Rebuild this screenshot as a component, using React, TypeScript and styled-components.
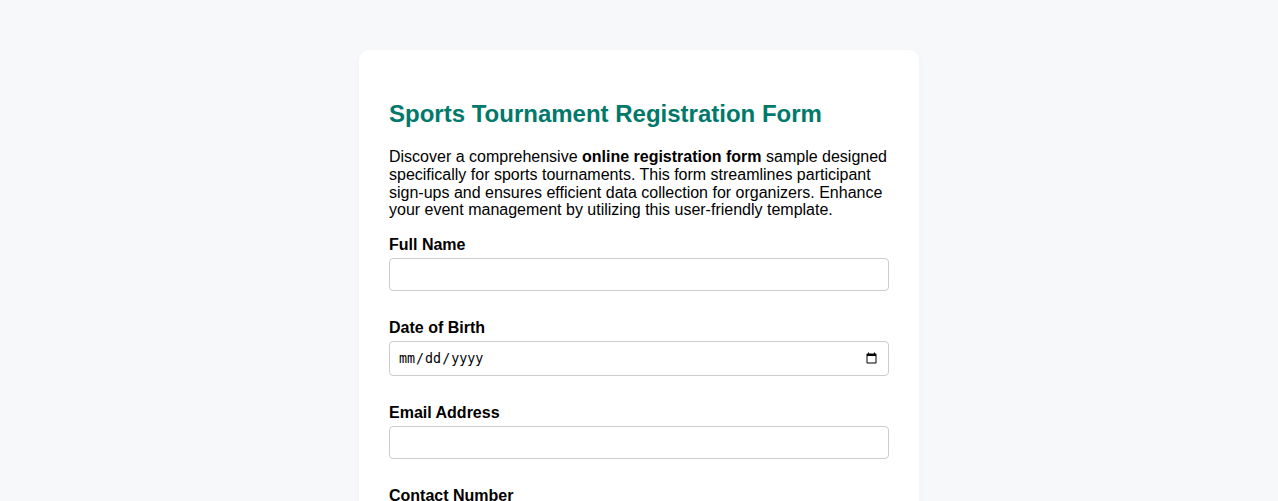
import * as React from "react";
import styled, { createGlobalStyle } from "styled-components";

const GlobalStyle = createGlobalStyle`
  html, body {
    margin: 0;
    padding: 0;
    background-color: #f7f8fa;
    font-family: "Liberation Sans", Arial, sans-serif;
    color: #000;
  }
`;

const Page = styled.div`
  padding: 50px 0;
`;

const Card = styled.div`
  max-width: 500px;
  margin: 0 auto;
  padding: 30px;
  background-color: #fff;
  border-radius: 10px;
  box-shadow: 0 2px 8px rgba(0, 0, 0, 0.03);
`;

const Title = styled.h1`
  margin: 20px 0 20px;
  font-size: 24px;
  font-weight: 700;
  color: #00796b;
`;

const Intro = styled.p`
  margin: 0 0 17px;
  font-size: 16px;
  line-height: 17.8px;
`;

const Group = styled.div`
  margin-bottom: 28px;
`;

const Label = styled.label`
  display: block;
  margin-bottom: 4px;
  font-size: 16px;
  font-weight: 700;
`;

const Input = styled.input`
  display: block;
  width: 100%;
  box-sizing: border-box;
  padding: 8px;
  border: 1px solid #ccc;
  border-radius: 4px;
  background-color: #fff;
  font-size: 13.33px;
  height: ${(p) => (p.type === "date" ? "35px" : "33px")};
`;

const fields = [
  { id: "fullName", label: "Full Name", type: "text" },
  { id: "dob", label: "Date of Birth", type: "date" },
  { id: "email", label: "Email Address", type: "email" },
  { id: "contact", label: "Contact Number", type: "tel" },
];

export default function App() {
  return (
    <>
      <GlobalStyle />
      <Page>
        <Card>
          <Title>Sports Tournament Registration Form</Title>
          <Intro>
            Discover a comprehensive <strong>online registration form</strong>{" "}
            sample designed specifically for sports tournaments. This form
            streamlines participant sign-ups and ensures efficient data
            collection for organizers. Enhance your event management by
            utilizing this user-friendly template.
          </Intro>
          <form>
            {fields.map((f) => (
              <Group key={f.id}>
                <Label htmlFor={f.id}>{f.label}</Label>
                <Input id={f.id} name={f.id} type={f.type} />
              </Group>
            ))}
          </form>
        </Card>
      </Page>
    </>
  );
}
